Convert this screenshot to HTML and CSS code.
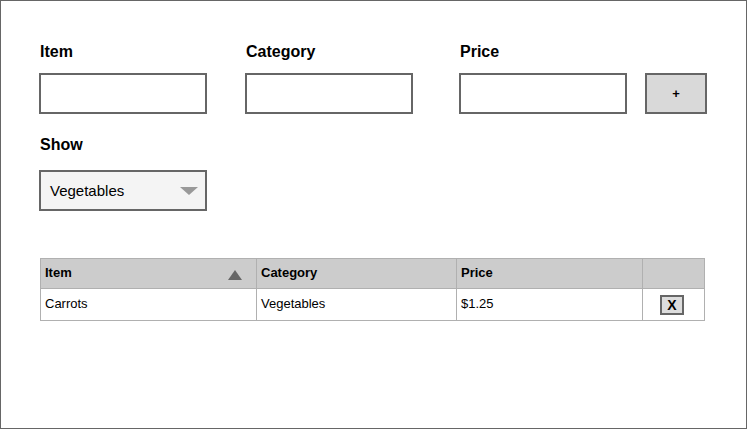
FILE: index.html
```html
<!DOCTYPE html>
<html>
<head>
<meta charset="utf-8">
<link rel="stylesheet" href="styles.css">
</head>
<body>
<div class="frame">
  <div class="form-row">
    <div class="field">
      <label class="lbl">Item</label>
      <input class="txt" type="text">
    </div>
    <div class="field">
      <label class="lbl">Category</label>
      <input class="txt" type="text">
    </div>
    <div class="field">
      <label class="lbl">Price</label>
      <input class="txt" type="text">
    </div>
    <div class="field">
      <button class="add">+</button>
    </div>
  </div>
  <div class="show">
    <div class="lbl">Show</div>
    <div class="select"><span class="select-text">Vegetables</span><span class="caret"></span></div>
  </div>
  <table class="grid">
    <colgroup>
      <col class="c-item"><col class="c-cat"><col class="c-price"><col class="c-act">
    </colgroup>
    <thead>
      <tr>
        <th><div class="th-sort"><span>Item</span><span class="sort-up"></span></div></th>
        <th>Category</th>
        <th>Price</th>
        <th></th>
      </tr>
    </thead>
    <tbody>
      <tr>
        <td>Carrots</td>
        <td>Vegetables</td>
        <td>$1.25</td>
        <td class="act"><button class="del">X</button></td>
      </tr>
    </tbody>
  </table>
</div>
</body>
</html>
```

FILE: styles.css
```css
* { box-sizing: border-box; }
html, body { margin: 0; padding: 0; background: #fff; }
body { font-family: "Liberation Sans", Arial, sans-serif; color: #000; }

.frame {
  width: 747px;
  height: 429px;
  border: 1px solid #666;
  padding: 42px 0 0 38px;
}

.form-row {
  display: grid;
  grid-template-columns: 206px 214px 186px 62px;
  align-items: end;
}

.field {
  display: flex;
  flex-direction: column;
  gap: 12px;
}

.lbl {
  display: block;
  font-size: 16px;
  font-weight: bold;
  line-height: 18px;
  padding-left: 1px;
}

.txt {
  width: 168px;
  height: 41px;
  border: 2px solid #666;
  background: #fff;
  margin: 0;
  padding: 0 8px;
  font: 15px "Liberation Sans", Arial, sans-serif;
  outline: none;
}

.add {
  width: 62px;
  height: 41px;
  border: 2px solid #666;
  background: #d9d9d9;
  margin: 0;
  padding: 0;
  font: bold 13px "Liberation Sans", Arial, sans-serif;
  color: #000;
}

.show {
  margin-top: 22px;
  display: flex;
  flex-direction: column;
  gap: 16px;
}

.select {
  width: 168px;
  height: 41px;
  border: 2px solid #666;
  background: #f4f4f4;
  display: flex;
  align-items: center;
  justify-content: space-between;
  padding: 0 7px 0 9px;
}

.select-text { font-size: 15px; }

.caret {
  width: 0;
  height: 0;
  border-left: 9px solid transparent;
  border-right: 9px solid transparent;
  border-top: 8px solid #999;
}

.grid {
  margin-top: 47px;
  margin-left: 1px;
  border-collapse: collapse;
  table-layout: fixed;
  width: 664px;
  font-size: 13px;
}

.c-item { width: 216px; }
.c-cat { width: 200px; }
.c-price { width: 186px; }
.c-act { width: 62px; }

.grid th, .grid td {
  border: 1px solid #b0b0b0;
  text-align: left;
  padding: 0 4px 2px;
  vertical-align: middle;
}

.grid th {
  background: #ccc;
  font-weight: bold;
  height: 30px;
}

.grid td {
  height: 32px;
}

.th-sort {
  display: flex;
  align-items: center;
  justify-content: space-between;
  padding-right: 10px;
}

.sort-up {
  width: 0;
  height: 0;
  border-left: 7px solid transparent;
  border-right: 7px solid transparent;
  border-bottom: 10px solid #666;
  margin-top: 5px;
}

.grid td.act {
  text-align: center;
  padding: 0 3px 0 0;
}

.del {
  width: 24px;
  height: 20px;
  border: 2px solid #666;
  background: #ddd;
  margin: 0;
  padding: 0;
  font: bold 14px "Liberation Sans", Arial, sans-serif;
  color: #000;
  line-height: 16px;
}
```
